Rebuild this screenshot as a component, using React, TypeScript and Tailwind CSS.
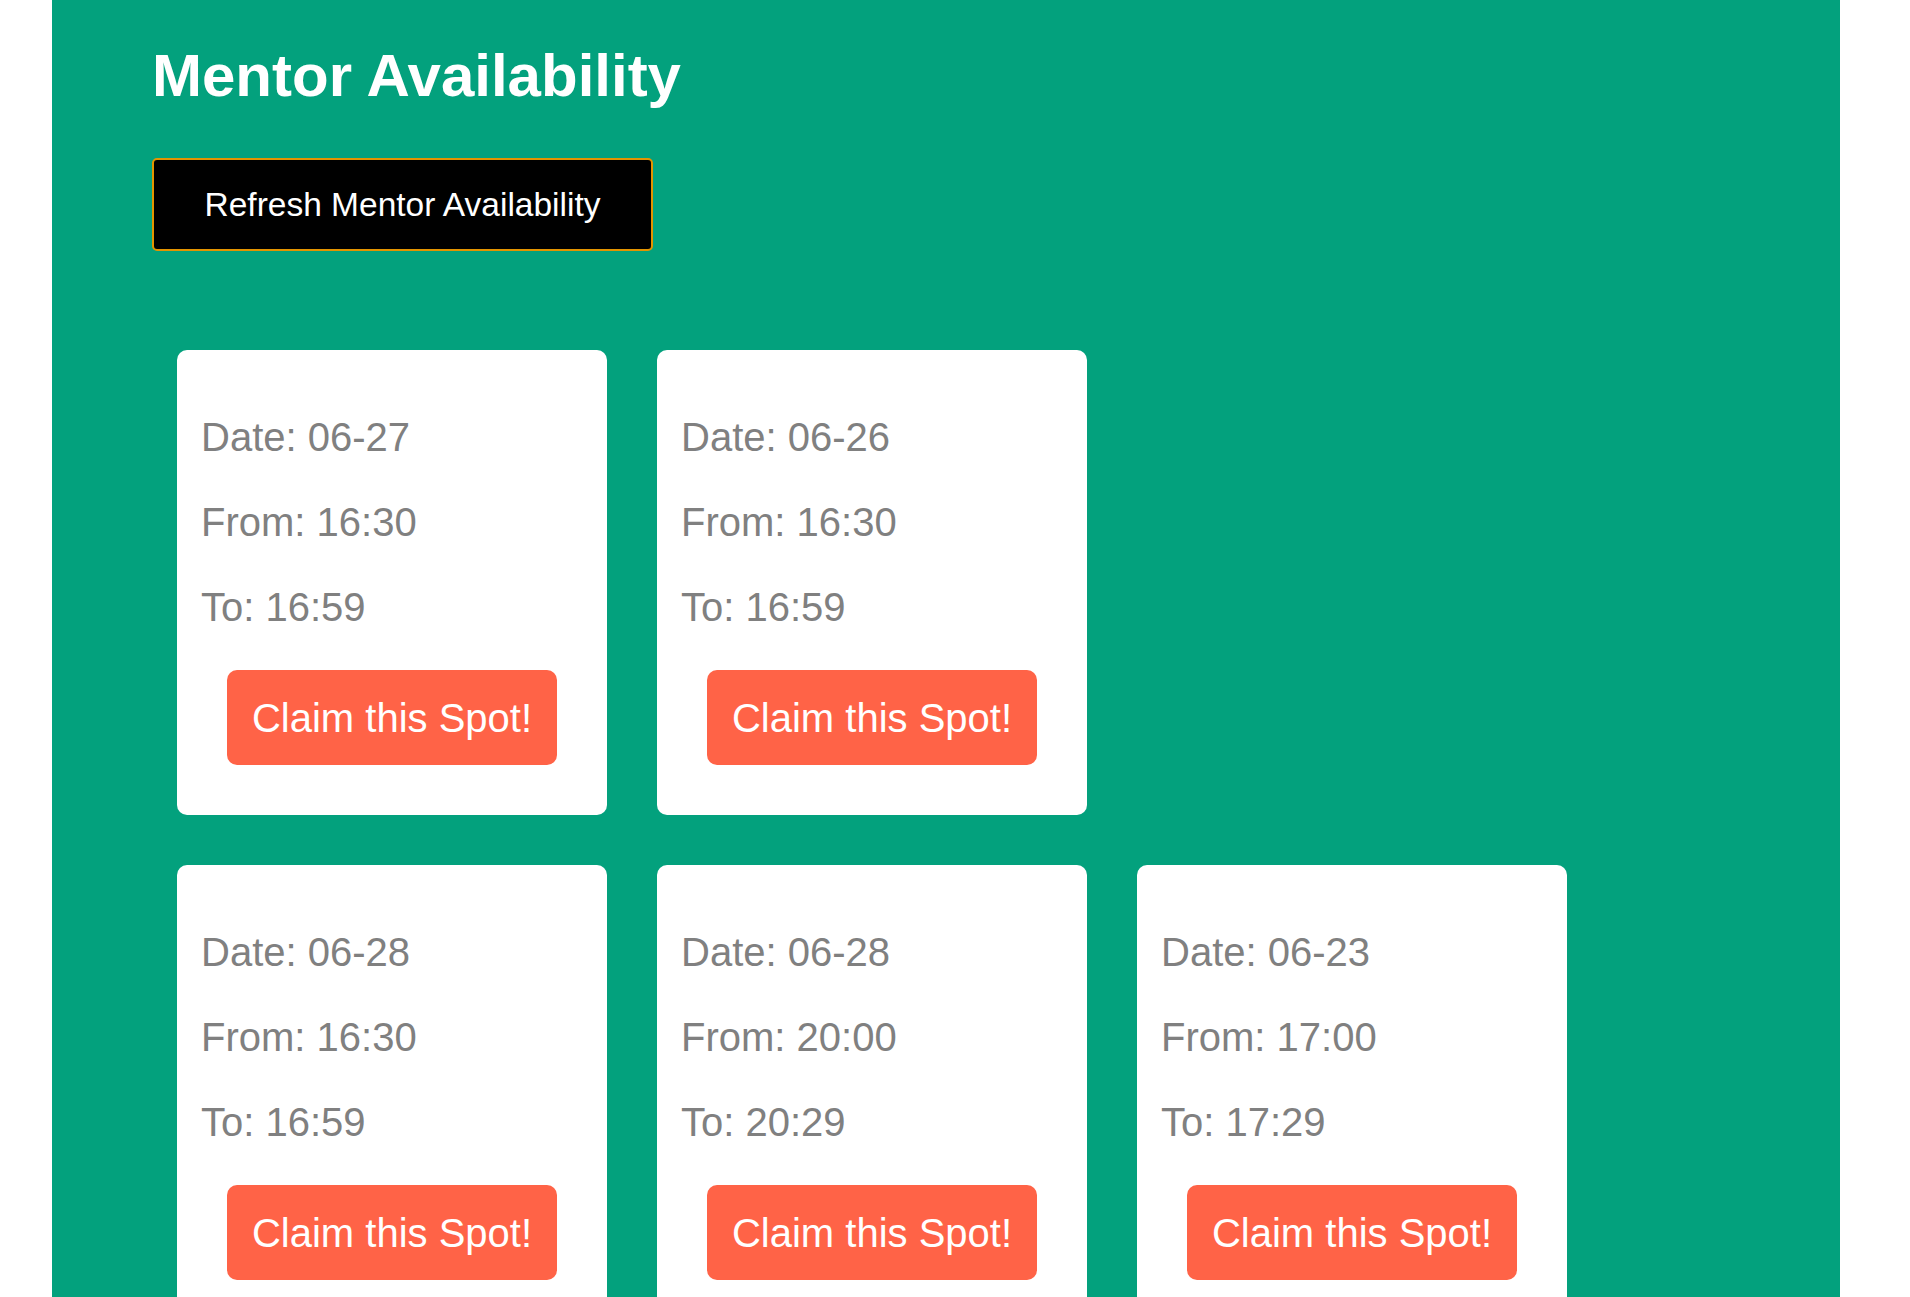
import React from "react";

type Slot = { date: string; from: string; to: string };

const rows: Slot[][] = [
  [
    { date: "06-27", from: "16:30", to: "16:59" },
    { date: "06-26", from: "16:30", to: "16:59" },
  ],
  [
    { date: "06-28", from: "16:30", to: "16:59" },
    { date: "06-28", from: "20:00", to: "20:29" },
    { date: "06-23", from: "17:00", to: "17:29" },
  ],
];

function Card({ slot }: { slot: Slot }) {
  return (
    <div className="w-[430px] h-[465px] shrink-0 rounded-[10px] bg-white px-[24px] pt-[64px] flex flex-col">
      <div className="flex flex-col gap-[39px] text-[40px] leading-[46px] text-[#808080]">
        <p>Date: {slot.date}</p>
        <p>From: {slot.from}</p>
        <p>To: {slot.to}</p>
      </div>
      <button className="mt-[40px] self-center h-[95px] px-[25px] rounded-[10px] bg-[#ff6347] text-white text-[40px] leading-[46px]">
        Claim this Spot!
      </button>
    </div>
  );
}

export default function App() {
  return (
    <div
      className="min-h-screen bg-white"
      style={{ fontFamily: '"Liberation Sans", Arial, sans-serif' }}
    >
      <div className="ml-[52px] w-[1788px] min-h-screen bg-[#03a17d] pl-[100px] pt-[41px] pb-[60px]">
        <h1 className="text-[60px] leading-[69px] font-bold text-white">
          Mentor Availability
        </h1>
        <button className="mt-[48px] w-[501px] h-[93px] rounded-[5px] border-2 border-[#e39400] bg-black text-white text-[33.5px] leading-[38px]">
          Refresh Mentor Availability
        </button>
        <div className="mt-[99px] pl-[25px] flex flex-col gap-[50px]">
          {rows.map((row, i) => (
            <div key={i} className="flex gap-[50px]">
              {row.map((s, j) => (
                <Card key={j} slot={s} />
              ))}
            </div>
          ))}
        </div>
      </div>
    </div>
  );
}
